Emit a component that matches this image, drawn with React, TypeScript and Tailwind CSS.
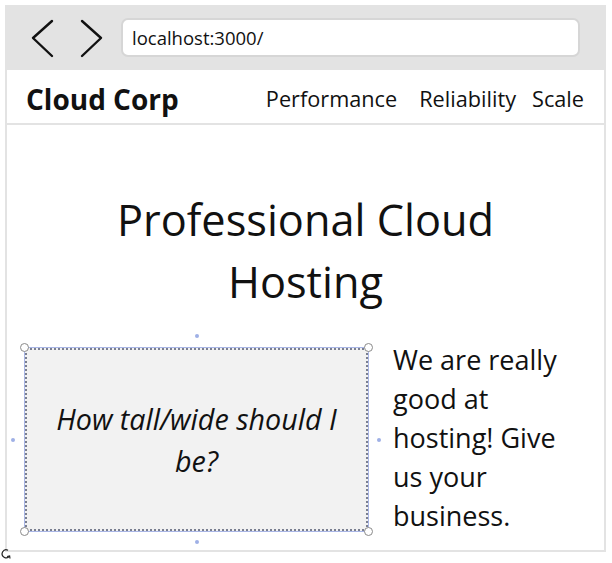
import React from "react";

const font = { fontFamily: '"Open Sans", "Noto Sans", sans-serif' };

function Handle({ className }: { className: string }) {
  return (
    <div
      className={`absolute w-[9px] h-[9px] rounded-full bg-white border border-[#8a8a8a] ${className}`}
    />
  );
}

function Dot({ className }: { className: string }) {
  return <div className={`absolute w-[4px] h-[4px] rounded-full bg-[#9fb0e6] ${className}`} />;
}

export default function App() {
  return (
    <div className="relative w-[612px] h-[563px] bg-white" style={font}>
      <div className="absolute left-[5px] top-[5px] w-[601px] h-[547px] bg-[#e3e3e3] flex flex-col px-[2px] pb-[2px]">
        {/* browser chrome */}
        <div className="h-[65px] flex items-center shrink-0">
          <svg width="110" height="65" viewBox="0 0 110 65" className="shrink-0">
            <polyline points="45,16 26,33 45,51" fill="none" stroke="#111" strokeWidth="2.4" strokeLinecap="round" strokeLinejoin="round" />
            <polyline points="75,16 94,33 75,51" fill="none" stroke="#111" strokeWidth="2.4" strokeLinecap="round" strokeLinejoin="round" />
          </svg>
          <div className="ml-[4px] w-[459px] h-[39px] bg-white rounded-[7px] border-2 border-[#d6d6d6] flex items-center pl-[9px] text-[18.5px] text-[#111]">
            localhost:3000/
          </div>
        </div>
        {/* page */}
        <div className="flex-1 bg-white flex flex-col">
          <div className="h-[55px] flex items-center border-b-2 border-[#e3e3e3] pl-[19px] shrink-0">
            <div className="text-[28px] font-bold text-[#111] leading-none mt-[5px]">Cloud Corp</div>
            <div className="flex-1" />
            <div className="text-[21.7px] text-[#111] leading-none mt-[5px]">Performance</div>
            <div className="ml-[22px] text-[21.7px] text-[#111] leading-none mt-[5px]">Reliability</div>
            <div className="ml-[16px] mr-[20px] text-[21.7px] text-[#111] leading-none mt-[5px]">Scale</div>
          </div>
          <div className="flex flex-col">
            <h1 className="mt-[64px] text-center text-[43.3px] leading-[62px] text-[#111] px-[90px]">
              Professional Cloud Hosting
            </h1>
            <div className="flex mt-[34px]">
              <div className="relative ml-[17px] w-[345px] h-[185px] bg-[#f2f2f2] border border-[#a9b6e6] shrink-0">
                <div className="absolute inset-0 border-2 border-dotted border-[#7a7f90]" />
                <div className="absolute inset-0 flex items-center justify-center text-center italic text-[28.7px] leading-[42px] text-[#111] px-[16px]">
                  How tall/wide should I be?
                </div>
                <Handle className="left-[-5px] top-[-5px]" />
                <Handle className="right-[-5px] top-[-5px]" />
                <Handle className="left-[-5px] bottom-[-5px]" />
                <Handle className="right-[-5px] bottom-[-5px]" />
                <Dot className="left-[170px] top-[-14px]" />
                <Dot className="left-[170px] bottom-[-13px]" />
                <Dot className="left-[-14px] top-[90px]" />
                <Dot className="right-[-13px] top-[90px]" />
              </div>
              <div className="ml-[24px] w-[190px] mt-[-7px] text-[27px] leading-[39px] text-[#111]">
                We are really good at hosting! Give us your business.
              </div>
            </div>
          </div>
        </div>
      </div>
      <svg className="absolute left-[0px] top-[547px]" width="14" height="14" viewBox="0 0 14 14">
        <path d="M8 3.2 A4 4 0 1 0 9.5 9" fill="none" stroke="#222" strokeWidth="1.2" />
        <polyline points="7,9.5 9.6,9 10,11.5" fill="none" stroke="#222" strokeWidth="1.2" />
      </svg>
    </div>
  );
}
